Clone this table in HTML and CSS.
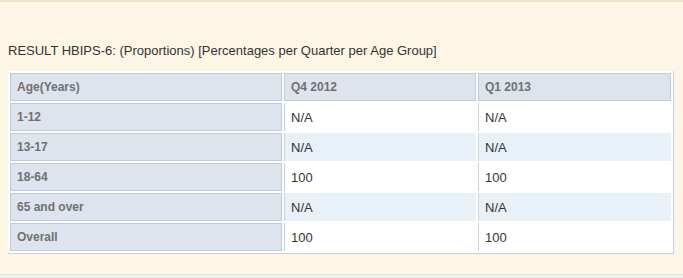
FILE: index.html
```html
<!DOCTYPE html>
<html>
<head>
<meta charset="utf-8">
<link rel="stylesheet" href="styles.css">
</head>
<body>
<div class="panel">
  <div class="title">RESULT HBIPS-6: (Proportions) [Percentages per Quarter per Age Group]</div>
  <table class="grid">
    <colgroup><col class="c1"><col class="c2"><col class="c3"></colgroup>
    <tr><th>Age(Years)</th><th>Q4 2012</th><th>Q1 2013</th></tr>
    <tr><td class="label">1-12</td><td class="val">N/A</td><td class="val">N/A</td></tr>
    <tr class="alt"><td class="label">13-17</td><td class="val">N/A</td><td class="val">N/A</td></tr>
    <tr><td class="label">18-64</td><td class="val">100</td><td class="val">100</td></tr>
    <tr class="alt"><td class="label">65 and over</td><td class="val">N/A</td><td class="val">N/A</td></tr>
    <tr><td class="label">Overall</td><td class="val">100</td><td class="val">100</td></tr>
  </table>
</div>
<div class="footer"></div>
</body>
</html>
```
FILE: styles.css
```css
html, body {
  margin: 0;
  padding: 0;
}
body {
  background: #fdf6e7;
  font-family: "Liberation Sans", Arial, sans-serif;
  overflow: hidden;
}
.panel {
  box-sizing: border-box;
  height: 274px;
  border-top: 2px solid #ece3c9;
  padding: 41px 8px 0 8px;
}
.title {
  font-size: 13px;
  line-height: 15px;
  color: #333;
  margin-bottom: 13px;
}
.grid {
  width: 666px;
  background: #fff;
  border-collapse: separate;
  border-spacing: 2px;
  border-right: 1px solid #c8d0da;
  border-bottom: 1px solid #c8d0da;
  table-layout: fixed;
}
.c1 { width: 272px; }
.c2 { width: 192px; }
.c3 { width: 193px; }
.grid th, .grid td.label {
  box-sizing: border-box;
  height: 28px;
  background: #dee4ed;
  border: 1px solid #bccbdd;
  padding: 0 6px;
  text-align: left;
  font-size: 12px;
  font-weight: bold;
  color: #707070;
}
.grid td.val {
  box-sizing: border-box;
  height: 28px;
  border-left: 1px solid #c5d1e0;
  padding: 0 6px;
  font-size: 13px;
  color: #333;
  background: #fff;
}
.grid tr.alt td.val {
  background: #e8f0f8;
}
.footer {
  height: 4px;
  border-top: 1px solid #e9e2cf;
  background: #e8f0f8;
}
```
